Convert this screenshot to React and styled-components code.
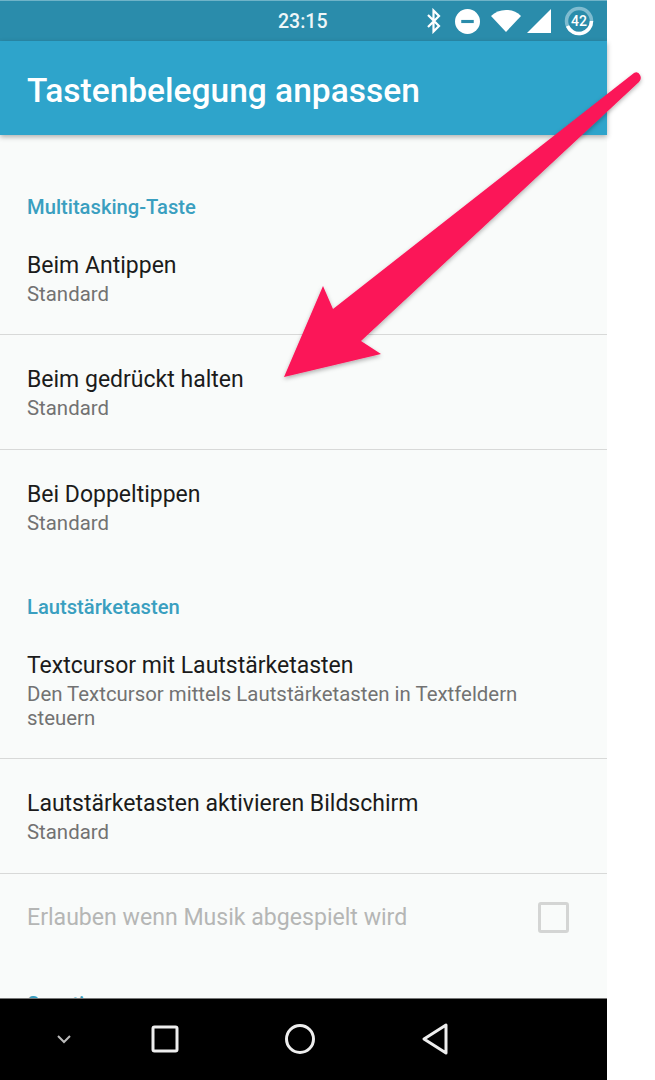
import React from 'react'
import styled, { createGlobalStyle } from 'styled-components'

const Global = createGlobalStyle`
html, body { margin:0; padding:0; background:#fff; }
body { font-family:Roboto, "Noto Sans", sans-serif; }
`;

const Phone = styled.div`
position:relative;
width:607px;
height:1080px;
display:flex;
flex-direction:column;
`;

const StatusBar = styled.div`
height:41px;
flex:none;
background:#2a8cab;
border-top:1px solid #6fb3c8;
display:flex;
align-items:center;
padding:0 0 0 278px;
box-sizing:border-box;
`;

const Clock = styled.span`
font-size:19.5px;
font-weight:500;
width:147px;
color:#eef6f8;
`;

const StatusIcons = styled.div`
display:flex;
align-items:center;
`;

const StatusIcon = styled.svg`
flex:none;
margin-right:${p => p.$gap || 0}px;
`;

const AppBar = styled.div`
height:94px;
flex:none;
background:#2ea4cb;
display:flex;
align-items:center;
padding:4px 27px 0;
box-sizing:border-box;
box-shadow:0 2px 5px rgba(0,0,0,.3);
position:relative;
z-index:1;
`;

const Title = styled.h1`
margin:0;
color:#fff;
font-size:33.5px;
font-weight:500;
`;

const Content = styled.div`
flex:1;
background:#f9fbfa;
overflow:hidden;
min-height:0;
`;

const SectionTitle = styled.div`
color:#3a9fc0;
font-size:20.2px;
font-weight:500;
line-height:24px;
padding:${p => p.$top}px 27px 0;
`;

const Row = styled.div`
height:${p => p.$height}px;
box-sizing:border-box;
padding:${p => p.$top}px 60px 0 27px;
border-bottom:${p => p.$last ? 'none' : '1px solid #d8d9d8'};
`;

const RowTitle = styled.div`
font-size:23px;
line-height:28px;
color:#1b1b1b;
`;

const RowSub = styled.div`
font-size:20.4px;
line-height:24px;
margin-top:2px;
color:#727272;
`;

const ToggleRow = styled.div`
height:86px;
display:flex;
align-items:center;
justify-content:space-between;
padding:0 38px 0 27px;
`;

const DisabledTitle = styled.span`
font-size:23.1px;
color:#b5b6b5;
`;

const Checkbox = styled.div`
width:25px;
height:25px;
border:3px solid #d4d5d4;
border-radius:3px;
`;

const NavBar = styled.div`
height:82px;
flex:none;
background:#000;
border-top:1px solid #777;
padding-bottom:2px;
box-sizing:border-box;
display:flex;
align-items:center;
position:relative;
z-index:1;
`;

const NavSlot = styled.div`
width:${p => p.$w}px;
display:flex;
justify-content:center;
`;

const Arrow = styled.svg`
position:absolute;
left:0;
top:0;
z-index:2;
pointer-events:none;
overflow:visible;
`;

function Bluetooth() {
  return (
    <StatusIcon $gap={12} width="18" height="26" viewBox="0 0 18 26">
      <path d="M3 7l11 11-5.5 5.5v-21L14 8 3 19" fill="none" stroke="#fff" strokeWidth="2.2" />
    </StatusIcon>
  )
}

function Dnd() {
  return (
    <StatusIcon $gap={11} width="25" height="25" viewBox="0 0 24 24">
      <circle cx="12" cy="12" r="12" fill="#fff" />
      <rect x="6" y="10.5" width="12" height="3" fill="#2a8cab" />
    </StatusIcon>
  )
}

function Wifi() {
  return (
    <StatusIcon $gap={6} width="30" height="24" viewBox="0 0 30 24">
      <path d="M0 7C4 3 9 1 15 1s11 2 15 6L15 23z" fill="#fff" />
    </StatusIcon>
  )
}

function Signal() {
  return (
    <StatusIcon $gap={13} width="24" height="24" viewBox="0 0 24 24">
      <path d="M24 0v24H0z" fill="#fff" />
    </StatusIcon>
  )
}

function Battery() {
  return (
    <StatusIcon width="30" height="30" viewBox="0 0 30 30">
      <circle cx="15" cy="15" r="12.5" fill="none" stroke="#7fbcd0" strokeWidth="3.5" />
      <path d="M27.5 15A12.5 12.5 0 0 1 3.5 20" fill="none" stroke="#fff" strokeWidth="3.5" />
      <text x="15" y="20" textAnchor="middle" fontSize="14" fontWeight="500" fontFamily="Roboto" fill="#fff">42</text>
    </StatusIcon>
  )
}

export default function App() {
  return (
    <Phone>
      <Global />
      <StatusBar>
        <Clock>23:15</Clock>
        <StatusIcons>
          <Bluetooth />
          <Dnd />
          <Wifi />
          <Signal />
          <Battery />
        </StatusIcons>
      </StatusBar>
      <AppBar>
        <Title>Tastenbelegung anpassen</Title>
      </AppBar>
      <Content>
        <SectionTitle $top={60}>Multitasking-Taste</SectionTitle>
        <Row $height={116} $top={33}>
          <RowTitle>Beim Antippen</RowTitle>
          <RowSub>Standard</RowSub>
        </Row>
        <Row $height={115} $top={31}>
          <RowTitle>Beim gedrückt halten</RowTitle>
          <RowSub>Standard</RowSub>
        </Row>
        <Row $height={115} $top={31} $last>
          <RowTitle>Bei Doppeltippen</RowTitle>
          <RowSub>Standard</RowSub>
        </Row>
        <SectionTitle $top={30}>Lautstärketasten</SectionTitle>
        <Row $height={140} $top={33}>
          <RowTitle>Textcursor mit Lautstärketasten</RowTitle>
          <RowSub>Den Textcursor mittels Lautstärketasten in Textfeldern steuern</RowSub>
        </Row>
        <Row $height={115} $top={31}>
          <RowTitle>Lautstärketasten aktivieren Bildschirm</RowTitle>
          <RowSub>Standard</RowSub>
        </Row>
        <ToggleRow>
          <DisabledTitle>Erlauben wenn Musik abgespielt wird</DisabledTitle>
          <Checkbox />
        </ToggleRow>
        <SectionTitle $top={32}>Sonstiges</SectionTitle>
      </Content>
      <NavBar>
        <NavSlot $w={128}>
          <svg width="16" height="10" viewBox="0 0 16 10">
            <path d="M2 2l6 6 6-6" fill="none" stroke="#bbb" strokeWidth="2" />
          </svg>
        </NavSlot>
        <NavSlot $w={74}>
          <svg width="28" height="28" viewBox="0 0 28 28">
            <rect x="2" y="2" width="24" height="24" rx="1.5" fill="none" stroke="#eee" strokeWidth="3" />
          </svg>
        </NavSlot>
        <NavSlot $w={196}>
          <svg width="32" height="32" viewBox="0 0 32 32">
            <circle cx="16" cy="16" r="13.5" fill="none" stroke="#eee" strokeWidth="3" />
          </svg>
        </NavSlot>
        <NavSlot $w={74}>
          <svg width="28" height="32" viewBox="0 0 28 32">
            <path d="M25 2v28L3 16z" fill="none" stroke="#eee" strokeWidth="3" strokeLinejoin="round" />
          </svg>
        </NavSlot>
      </NavBar>
      <Arrow width="655" height="1080" viewBox="0 0 655 1080">
        <defs>
          <filter id="arrowShadow" x="-10%" y="-10%" width="120%" height="120%">
            <feDropShadow dx="0" dy="2" stdDeviation="2" floodColor="#000" floodOpacity=".3" />
          </filter>
        </defs>
        <path
          d="M284 377L323 286L333 309L634 73Q638 71 640 75Q642 79 639 82L361 341L381 354Z"
          fill="#fb1558"
          filter="url(#arrowShadow)"
        />
      </Arrow>
    </Phone>
  )
}
